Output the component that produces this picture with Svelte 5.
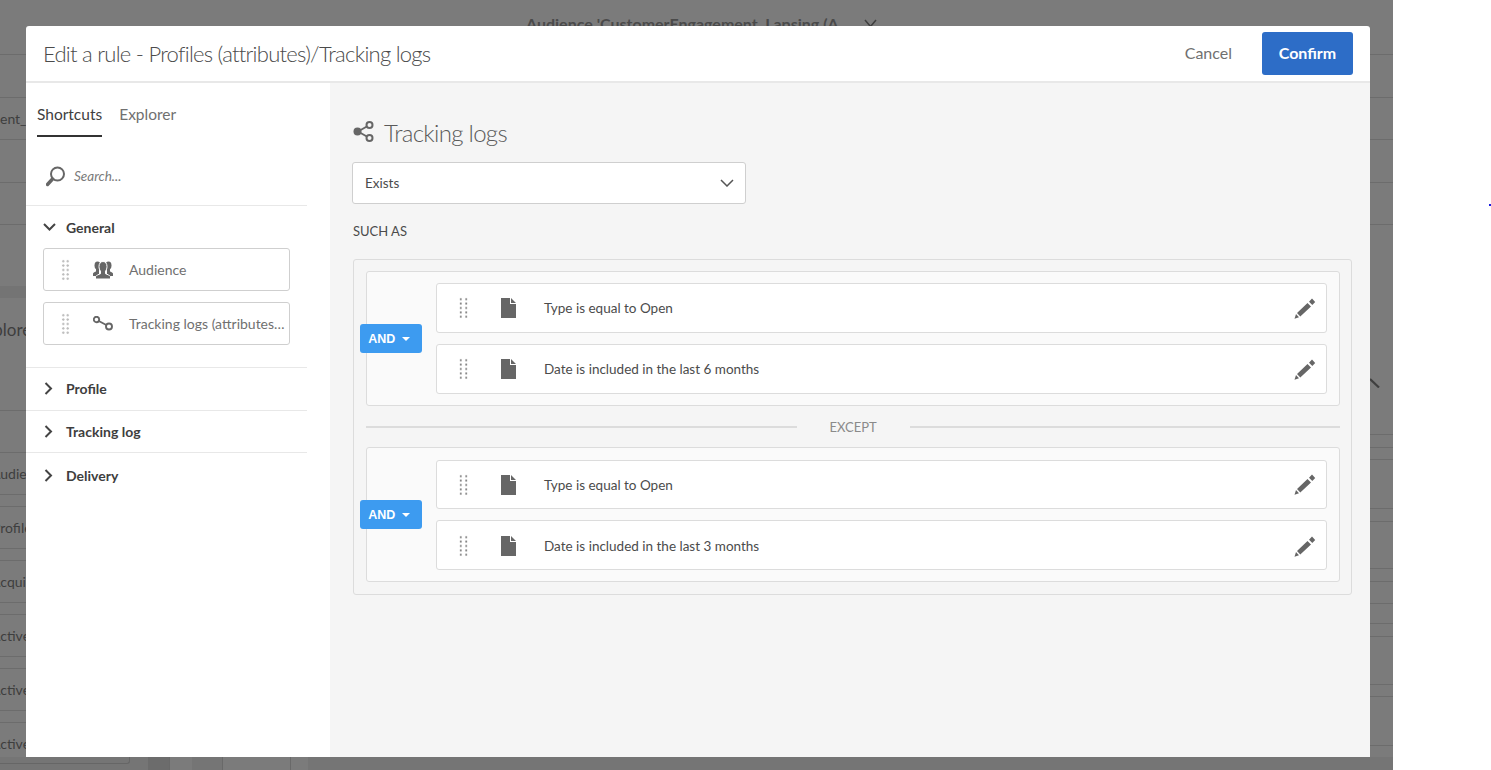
<script>
  // bottoms of the table rows that show either side of the dialog
  const topLines = [54, 97, 139, 182, 224];
  const leftLines = [...topLines, 410, 452, 494, 506, 548, 560, 602, 614, 656, 668, 710, 722, 764];
  const rightLines = [...topLines, 434, 447, 459, 508, 521, 568, 581, 603, 623, 636, 684, 696, 745, 757];

  const leftTexts = {
    139: { text: "ent_", left: 0 },
    494: { text: "Audience", left: -9 },
    548: { text: "Profile", left: -8 },
    602: { text: "Acquisition", left: -9 },
    656: { text: "Active", left: -9 },
    710: { text: "Active", left: -9 },
    764: { text: "Active", left: -9 },
  };

  function toRows(lines) {
    let prev = 0;
    return lines.map((y) => {
      const h = y + 1 - prev;
      prev = y + 1;
      return { y, h };
    });
  }

  const leftRows = toRows(leftLines);
  const rightRows = toRows(rightLines);

  const groups = [
    { months: 6 },
    { months: 3, second: true },
  ];
</script>

<div class="page">
  <div class="backdrop">
    <div class="strip left">
      {#each leftRows as row}
        <div class="row" style:height="{row.h}px">
          {#if leftTexts[row.y]}
            <span class="row-text" style:margin-left="{leftTexts[row.y].left}px">{leftTexts[row.y].text}</span>
          {/if}
        </div>
      {/each}
    </div>
    <div class="strip right">
      {#each rightRows as row}
        <div class="row" style:height="{row.h}px"></div>
      {/each}
    </div>
    <div class="band"></div>
    <div class="explore">Explore</div>
    <div class="audience-title">
      Audience 'CustomerEngagement_Lapsing (A
      <svg width="13" height="9" viewBox="0 0 13 9">
        <path d="M1 1 L6.500 7.500 L12 1" fill="none" stroke="#3f3f3f" stroke-width="1.500" />
      </svg>
    </div>
    <svg class="stray" width="10" height="10" viewBox="0 0 10 10">
      <path d="M0 1 L9 9.500" stroke="#3f3f3f" stroke-width="2.200" />
    </svg>
    <div class="foot">
      <span class="foot-input"></span>
      <span class="foot-page"></span>
      <span class="foot-box one"></span>
      <span class="foot-box two"></span>
      <span class="foot-box three"></span>
    </div>
  </div>

  <div class="modal">
    <header>
      <h1>Edit a rule - Profiles (attributes)/Tracking logs</h1>
      <button class="cancel">Cancel</button>
      <button class="confirm">Confirm</button>
    </header>

    <div class="body">
      <aside>
        <nav class="tabs">
          <span class="tab active">Shortcuts</span>
          <span class="tab">Explorer</span>
        </nav>

        <div class="search">
          <svg width="20" height="21" viewBox="0 0 20 21">
            <circle cx="11.500" cy="8" r="6.500" fill="none" stroke="#666" stroke-width="2" />
            <path d="M6.500 13 L1.500 18.500" stroke="#666" stroke-width="3.400" stroke-linecap="round" />
          </svg>
          <span>Search...</span>
        </div>

        <section class="general">
          <div class="section-head">
            <svg class="chev" width="13" height="8" viewBox="0 0 13 8">
              <path d="M1 1 L6.500 6.500 L12 1" fill="none" stroke="#444" stroke-width="2" />
            </svg>
            <b>General</b>
          </div>
          <div class="shortcut">
            <span class="dots small"></span>
            <svg class="sc-icon" width="20" height="18" viewBox="0 0 20 18">
              <g fill="#666">
                <ellipse cx="4.500" cy="4.500" rx="3" ry="4" />
                <ellipse cx="15.500" cy="4.500" rx="3" ry="4" />
                <path d="M0 15v-2.500c.6-.9 2-1.500 3-1.900V6h3v9z" />
                <path d="M20 15v-2.500c-.6-.9-2-1.500-3-1.900V6h-3v9z" />
              </g>
              <path fill="#666" stroke="#fff" stroke-width="1" d="M10 .5c2.500 0 4 2.200 4 5 0 2-.7 3.700-1.500 4.600v2.600c2 .8 4 1.600 5 2.800V18h-15v-2.500c1-1.200 3-2 5-2.800v-2.600C6.700 9.200 6 7.500 6 5.500c0-2.800 1.500-5 4-5z" />
            </svg>
            <span class="sc-label">Audience</span>
          </div>
          <div class="shortcut">
            <span class="dots small"></span>
            <svg class="sc-icon" width="20" height="15" viewBox="0 0 20 15">
              <circle cx="3.500" cy="3.500" r="2.700" fill="none" stroke="#666" stroke-width="1.900" />
              <circle cx="16" cy="10.500" r="3" fill="none" stroke="#666" stroke-width="1.900" />
              <path d="M5.800 5 L13.300 9" stroke="#666" stroke-width="1.900" />
            </svg>
            <span class="sc-label">Tracking logs (attributes…</span>
          </div>
        </section>

        {#each ["Profile", "Tracking log", "Delivery"] as name}
          <div class="section-head closed">
            <svg class="chev" width="9" height="13" viewBox="0 0 9 13">
              <path d="M1.500 1 L7 6.500 L1.500 12" fill="none" stroke="#444" stroke-width="2" />
            </svg>
            <b>{name}</b>
          </div>
        {/each}
      </aside>

      <main>
        <div class="main-title">
          <svg width="21" height="21" viewBox="0 0 21 21">
            <path d="M5 10.500 L16.500 4 M5 10.500 L16.500 17" stroke="#666" stroke-width="2" />
            <circle cx="4.500" cy="10.500" r="4" fill="#666" />
            <circle cx="16.500" cy="4" r="3" fill="#f5f5f5" stroke="#666" stroke-width="2" />
            <circle cx="16.500" cy="17" r="3" fill="#f5f5f5" stroke="#666" stroke-width="2" />
          </svg>
          <h2>Tracking logs</h2>
        </div>

        <div class="select">
          <span>Exists</span>
          <svg width="14" height="8" viewBox="0 0 14 8">
            <path d="M1 1 L7 7 L13 1" fill="none" stroke="#555" stroke-width="1.500" />
          </svg>
        </div>

        <div class="such">SUCH AS</div>

        <div class="outer">
          {#each groups as group, i}
            {#if i > 0}
              <div class="except"><i></i><span>EXCEPT</span><i></i></div>
            {/if}
            <div class="group" class:second={group.second}>
              <button class="and">AND <em></em></button>
              <div class="rule">
                <span class="dots"></span>
                <svg class="file" width="15" height="20" viewBox="0 0 15 20">
                  <path fill="#666" d="M0 0h9v6h6v14H0z M10 0l5 5h-5z" />
                </svg>
                <span class="rule-text">Type is equal to Open</span>
                <svg class="pencil" width="22" height="21" viewBox="0 0 22 21">
                  <path fill="#666" d="M0.500 20.800 L2 16 L5 19.300z M3 15 L13.500 5 L17 8.500 L6.300 18.500z M15 3.700 L18 .6 L21.200 3.900 L18.300 6.900z" />
                </svg>
              </div>
              <div class="rule">
                <span class="dots"></span>
                <svg class="file" width="15" height="20" viewBox="0 0 15 20">
                  <path fill="#666" d="M0 0h9v6h6v14H0z M10 0l5 5h-5z" />
                </svg>
                <span class="rule-text">Date is included in the last {group.months} months</span>
                <svg class="pencil" width="22" height="21" viewBox="0 0 22 21">
                  <path fill="#666" d="M0.500 20.800 L2 16 L5 19.300z M3 15 L13.500 5 L17 8.500 L6.300 18.500z M15 3.700 L18 .6 L21.200 3.900 L18.300 6.900z" />
                </svg>
              </div>
            </div>
          {/each}
        </div>
      </main>
    </div>
  </div>

  <span class="blue-dot"></span>
</div>

<style>
  :global(body) {
    margin: 0;
    background: #fff;
    overflow: hidden;
    font-family: "Lato", "Open Sans", sans-serif;
    color: #4b4b4b;
  }

  .page {
    position: relative;
    width: 1491px;
    height: 770px;
    overflow: hidden;
  }

  .backdrop {
    position: relative;
    width: 1393px;
    height: 770px;
    background: #7b7b7b;
    overflow: hidden;
    display: flex;
    justify-content: space-between;
  }

  .strip {
    flex: none;
    overflow: hidden;
  }
  .strip.left {
    width: 26px;
  }
  .strip.right {
    width: 23px;
  }

  .row {
    display: flex;
    align-items: center;
    box-sizing: border-box;
    border-bottom: 1px solid #6c6c6c;
  }
  .row-text {
    font-size: 14px;
    color: #3e3e3e;
    white-space: nowrap;
  }

  .band {
    position: absolute;
    left: 0;
    top: 286px;
    width: 26px;
    height: 12px;
    background: #747474;
  }

  .explore {
    position: absolute;
    left: -25px;
    top: 320px;
    font-size: 17px;
    line-height: 20px;
    color: #3e3e3e;
  }

  .audience-title {
    position: absolute;
    left: 526px;
    top: 14px;
    font-size: 16px;
    font-weight: 700;
    color: #4a4a4a;
    white-space: nowrap;
    display: flex;
    align-items: center;
    gap: 25px;
  }

  .stray {
    position: absolute;
    left: 1370px;
    top: 378px;
  }

  .foot {
    position: absolute;
    left: 0;
    top: 757px;
    width: 1393px;
    height: 13px;
    background: #757575;
    display: flex;
    align-items: flex-start;
  }
  .foot-input {
    width: 130px;
    height: 7px;
    box-sizing: border-box;
    border: 1px solid #666;
    border-top: 0;
    border-left: 0;
    border-radius: 0 0 3px 0;
  }
  .foot-page {
    width: 21px;
    height: 13px;
    margin-left: 18px;
    background: #6c6c6c;
  }
  .foot-box {
    height: 13px;
    box-sizing: border-box;
    border-left: 1px solid #696969;
    background: #7b7b7b;
  }
  .foot-box.one {
    width: 23px;
  }
  .foot-box.two {
    width: 68px;
    margin-left: 30px;
  }
  .foot-box.three {
    width: 18px;
  }

  .modal {
    position: absolute;
    left: 26px;
    top: 26px;
    width: 1344px;
    height: 731px;
    background: #fff;
    border-radius: 3px 3px 0 0;
    display: flex;
    flex-direction: column;
  }

  header {
    box-sizing: border-box;
    height: 57px;
    flex: none;
    display: flex;
    align-items: center;
    padding: 0 17px;
    border-bottom: 2px solid #e8e8e8;
  }
  h1 {
    margin: 0;
    flex: 1;
    font-size: 22px;
    font-weight: 300;
    color: #4b4b4b;
    letter-spacing: -0.73px;
  }
  button {
    font-family: inherit;
    border: 0;
    padding: 0;
  }
  .cancel {
    background: none;
    font-size: 16px;
    color: #707070;
    margin: 0 30px 2px 0;
  }
  .confirm {
    width: 91px;
    height: 43px;
    padding-bottom: 2px;
    background: #2d6dc7;
    color: #fff;
    font-size: 16px;
    font-weight: 700;
    border-radius: 3px;
  }

  .body {
    flex: 1;
    display: flex;
    min-height: 0;
  }

  aside {
    width: 304px;
    flex: none;
    box-sizing: border-box;
    padding-right: 23px;
  }

  .tabs {
    display: flex;
    gap: 17px;
    padding: 19px 0 0 11px;
  }
  .tab {
    font-size: 15.5px;
    line-height: 24px;
    height: 33px;
    color: #707070;
  }
  .tab.active {
    color: #3e3e3e;
    border-bottom: 2px solid #333;
  }

  .search {
    display: flex;
    align-items: center;
    gap: 8px;
    height: 58px;
    padding: 10px 0 0 20px;
    border-bottom: 1px solid #e8e8e8;
    font-size: 13.5px;
    font-style: italic;
    color: #7a7a7a;
  }

  .general {
    padding: 0 17px 22px;
    border-bottom: 1px solid #e8e8e8;
  }

  .section-head {
    display: flex;
    align-items: center;
    height: 42px;
    font-size: 14px;
  }
  .section-head b {
    color: #3e3e3e;
    margin-left: 10px;
  }
  .section-head.closed {
    height: 41.5px;
    padding-left: 18px;
    border-bottom: 1px solid #e8e8e8;
  }
  .section-head.closed b {
    margin-left: 13px;
  }
  .section-head.closed:last-child {
    padding-top: 2px;
    border-bottom: 0;
  }

  .shortcut {
    box-sizing: border-box;
    height: 43px;
    width: 247px;
    margin-bottom: 11px;
    border: 1px solid #cfcfcf;
    border-radius: 3px;
    display: flex;
    align-items: center;
    padding-left: 17px;
    font-size: 14px;
    color: #707070;
  }
  .shortcut:last-child {
    margin-bottom: 0;
  }
  .sc-icon {
    margin-left: 23px;
    flex: none;
  }
  .sc-label {
    margin-left: 16px;
    white-space: nowrap;
  }

  .dots {
    flex: none;
    width: 11px;
    height: 22px;
    background-image: radial-gradient(circle, #808080 0.9px, transparent 1.100px);
    background-size: 5.500px 4.400px;
  }
  .dots.small {
    width: 9px;
    background-image: radial-gradient(circle, #bbb 1.100px, transparent 1.300px);
    background-size: 4.500px 4.400px;
  }

  main {
    flex: 1;
    background: #f5f5f5;
    padding: 0 18px 0 22px;
    min-width: 0;
  }

  .main-title {
    display: flex;
    align-items: center;
    gap: 10px;
    height: 52px;
    margin-top: 23px;
    padding-left: 1px;
  }
  .main-title svg {
    margin-bottom: 2px;
  }
  h2 {
    margin: 0;
    font-size: 24px;
    font-weight: 300;
    color: #5a5a5a;
    letter-spacing: -0.7px;
  }

  .select {
    box-sizing: border-box;
    width: 394px;
    height: 42px;
    margin-top: 4px;
    padding: 0 11px 1px 12px;
    background: #fff;
    border: 1px solid #cfcfcf;
    border-radius: 3px;
    display: flex;
    align-items: center;
    justify-content: space-between;
    font-size: 13.5px;
  }

  .such {
    margin: 19px 0 0 1px;
    font-size: 13px;
    line-height: 17px;
  }

  .outer {
    box-sizing: border-box;
    height: 336px;
    margin: 19px 0 0 1px;
    padding: 11px 11px 0 12px;
    border: 1px solid #dcdcdc;
    border-radius: 3px;
  }

  .group {
    position: relative;
    box-sizing: border-box;
    height: 135px;
    padding: 11px 12px 0 69px;
    background: #fafafa;
    border: 1px solid #dcdcdc;
    border-radius: 3px;
  }
  .group.second {
    padding-top: 12px;
  }
  .group.second .rule:nth-of-type(1) {
    height: 49px;
  }
  .group.second .rule:nth-of-type(2) {
    padding-top: 2px;
  }

  .and {
    position: absolute;
    left: -7px;
    top: 52px;
    width: 62px;
    height: 29px;
    padding: 1px 4px 0 0;
    background: #3d9bf0;
    color: #fff;
    font-family: "Liberation Sans", sans-serif;
    font-size: 12.5px;
    font-weight: 700;
    border-radius: 3px;
  }
  .and em {
    display: inline-block;
    margin-left: 3px;
    vertical-align: 2px;
    border: 4px solid transparent;
    border-top: 4px solid #fff;
    border-bottom: 0;
  }

  .rule {
    box-sizing: border-box;
    height: 50px;
    margin-bottom: 11px;
    background: #fff;
    border: 1px solid #dcdcdc;
    border-radius: 3px;
    display: flex;
    align-items: center;
    padding: 0 10px 0 21px;
    font-size: 13.5px;
    color: #4b4b4b;
  }
  .rule:last-child {
    margin-bottom: 0;
  }
  .file {
    margin-left: 32px;
    flex: none;
  }
  .rule-text {
    flex: 1;
    margin-left: 28px;
  }

  .except {
    display: flex;
    align-items: center;
    height: 41px;
    font-size: 13px;
    color: #8a8a8a;
  }
  .except i {
    flex: 1;
    height: 2px;
    background: #dcdcdc;
  }
  .except span {
    width: 113px;
    text-align: center;
  }

  .blue-dot {
    position: absolute;
    left: 1489px;
    top: 204px;
    width: 2px;
    height: 2px;
    background: #1a1ae0;
  }
</style>
